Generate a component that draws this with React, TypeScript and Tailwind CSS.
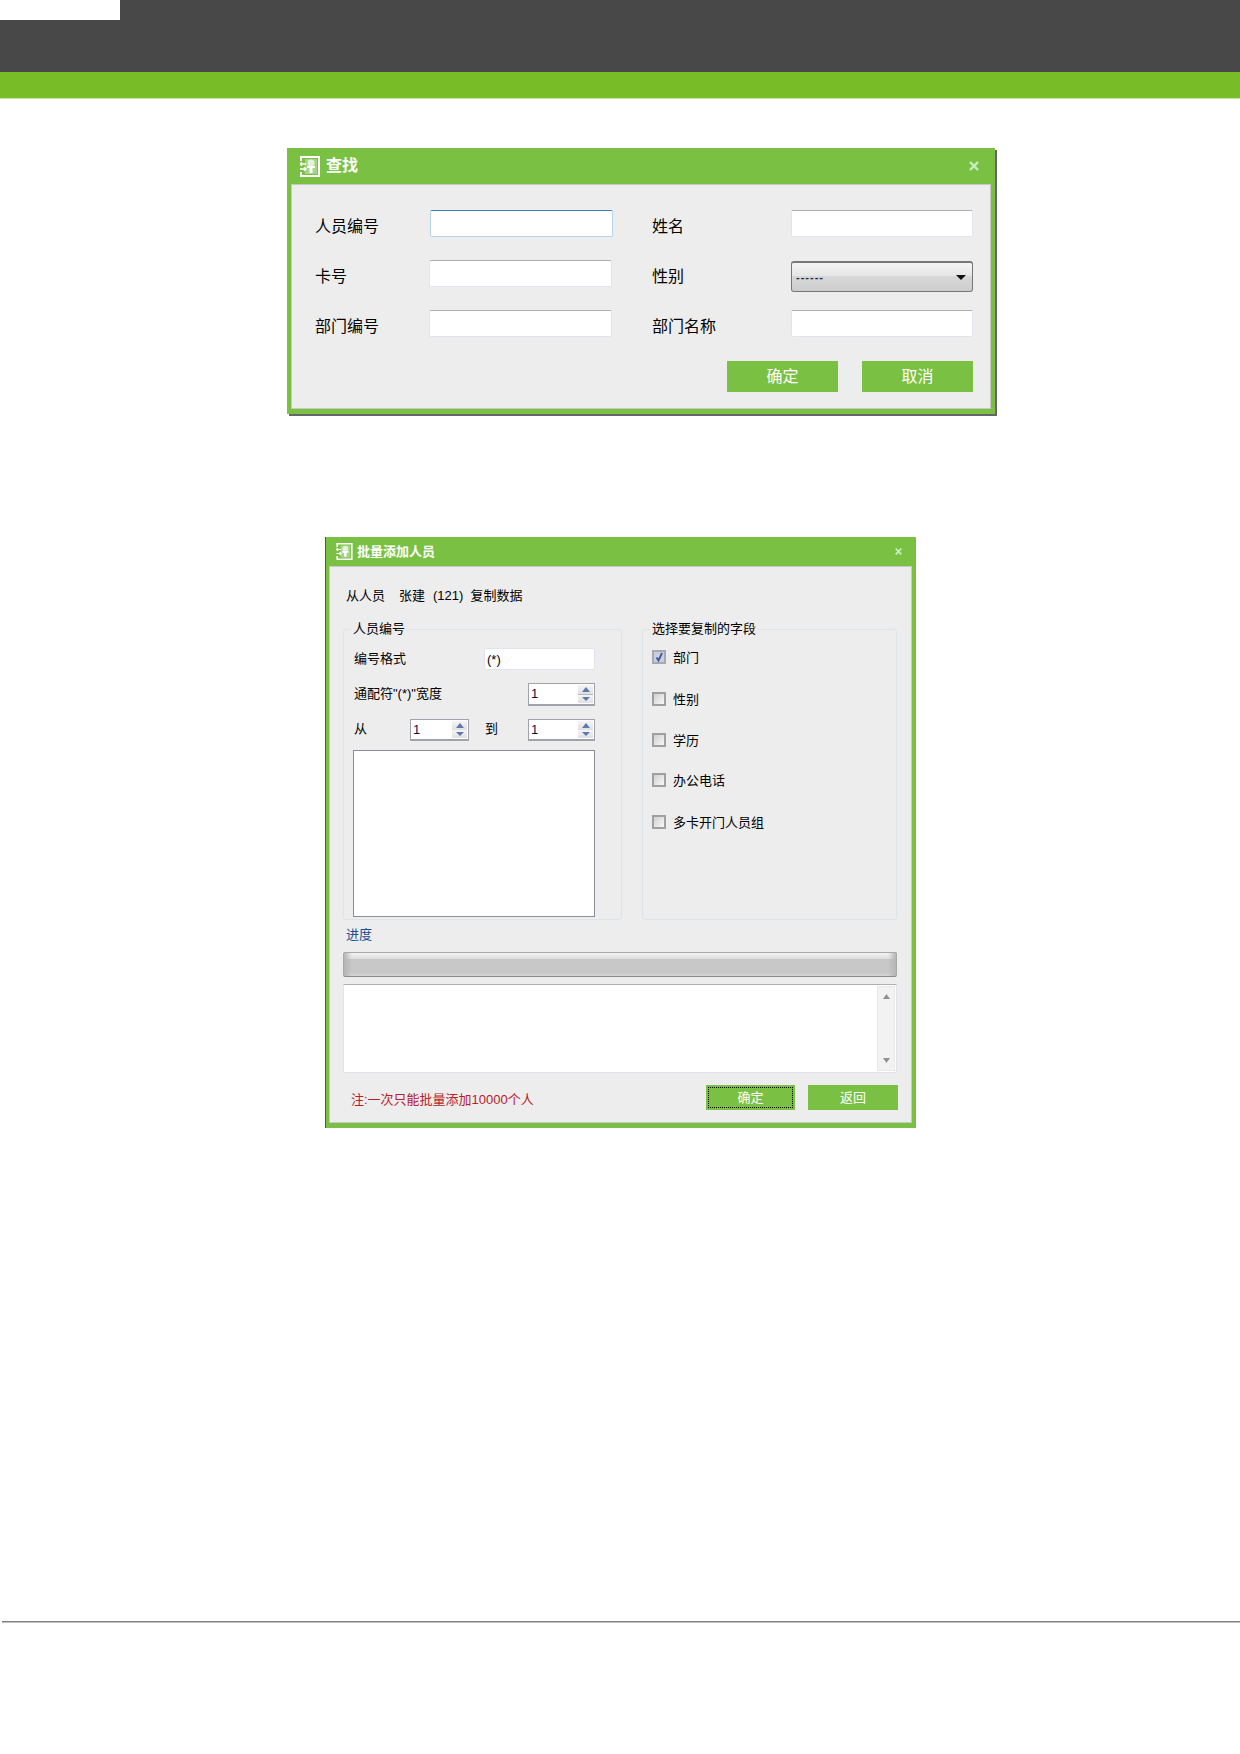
import React from "react";

function TitleIcon({ className }: { className: string }) {
  return (
    <svg viewBox="0 0 20 21" className={className}>
      <path d="M1 5V1H19V20H1V16" fill="none" stroke="#fff" strokeWidth="2" />
      <rect x="5" y="3" width="12" height="15" fill="#a5d38b" />
      <circle cx="11" cy="7" r="3.5" fill="#e4f3da" />
      <path d="M7 10H15V12H12.5V17H9.5V12H7Z" fill="#fff" />
      <path d="M0 8H6M2 6.3L0 8L2 9.7M0 13H6M4 11.3L6 13L4 14.7" fill="none" stroke="#fff" strokeWidth="1.4" />
    </svg>
  );
}

function CloseIcon({ className }: { className: string }) {
  return (
    <svg viewBox="0 0 10 10" className={className}>
      <path d="M1 1L9 9M9 1L1 9" stroke="#c9eec4" strokeWidth="2.4" fill="none" />
    </svg>
  );
}

function TextBox({ focused, className }: { focused?: boolean; className: string }) {
  return (
    <div
      className={
        focused
          ? `h-[27px] rounded-[2px] border border-[#b5d3ea] border-t-[#3b82b8] bg-white ${className}`
          : `h-[27px] rounded-[2px] border border-[#e1e4ea] border-t-[#aeaeb2] bg-white ${className}`
      }
    />
  );
}

function GreenButton({ label, className }: { label: string; className: string }) {
  return (
    <button className={`flex items-center justify-center bg-[#7ac143] text-white ${className}`}>{label}</button>
  );
}

function Spin({ className }: { className: string }) {
  return (
    <div className={`flex items-stretch justify-between border border-b-2 border-[#a0a3ae] bg-white py-px pl-[2px] pr-px text-[13px] leading-[18px] ${className}`}>
      <span className="text-[#101040]">1</span>
      <div className="flex w-[15px] flex-col justify-between bg-[#b5b7c0]">
        <div className="flex h-[9px] items-center justify-center bg-[linear-gradient(#f5f5f5,#dfe0e4)]">
          <svg viewBox="0 0 8 5" className="h-[5px] w-[8px]"><path d="M4 0L8 5H0Z" fill="#5d78b0" /></svg>
        </div>
        <div className="flex h-[8px] items-center justify-center bg-[linear-gradient(#f5f5f5,#dfe0e4)]">
          <svg viewBox="0 0 8 4" className="h-[4px] w-[8px]"><path d="M0 0H8L4 4Z" fill="#5d78b0" /></svg>
        </div>
      </div>
    </div>
  );
}

function Check({ label, checked, className }: { label: string; checked?: boolean; className: string }) {
  return (
    <div className={`flex h-[14px] items-center gap-[7px] text-[13px] text-black ${className}`}>
      <div
        className={
          checked
            ? "relative h-[14px] w-[14px] border-2 border-[#a8a8b0] bg-[#c9cfdc]"
            : "h-[14px] w-[14px] border-2 border-[#a0a0a0] bg-[linear-gradient(135deg,#cfd1d4,#f7f7f7)]"
        }
      >
        {checked && (
          <svg viewBox="0 0 10 10" className="absolute inset-0 h-[10px] w-[10px]">
            <path d="M2.5 5.5L4.5 8.5L8 1" fill="none" stroke="#3a55a5" strokeWidth="1.8" />
          </svg>
        )}
      </div>
      <span className="mt-[2px]">{label}</span>
    </div>
  );
}

function GroupBox({ title, className, children }: { title: string; className: string; children: React.ReactNode }) {
  return (
    <div className={`relative h-[291px] rounded-[3px] border border-[#dde4ea] ${className}`}>
      <span className="absolute -top-[10px] left-[7px] bg-[#ededed] px-[2px] text-[13px] leading-[18px] text-black">{title}</span>
      {children}
    </div>
  );
}

function FindRow({ a, b, focused, select }: { a: string; b: string; focused?: boolean; select?: boolean }) {
  return (
    <div className="mb-[23px] flex h-[27px] items-start text-[16px] text-black">
      <span className="w-[114px] pt-[3px] leading-[27px]">{a}</span>
      {focused ? <TextBox focused className="ml-px w-[183px]" /> : <TextBox className="w-[183px]" />}
      <span className={focused ? "ml-[39px] w-[139px] pt-[3px] leading-[27px]" : "ml-[40px] w-[139px] pt-[3px] leading-[27px]"}>{b}</span>
      {select ? (
        <div className="mt-px flex h-[31px] w-[182px] items-center justify-between rounded-[3px] border border-t-2 border-[#777] bg-[linear-gradient(#f4f4f4,#e6e6e6_45%,#d8d8d8_46%,#cdcdcd)] pl-[4px] pr-[6px]">
          <span className="text-[11px] font-bold leading-none tracking-[1px] text-[#1b2a55]">------</span>
          <svg viewBox="0 0 10 5" className="h-[5px] w-[10px]"><path d="M0 0H10L5 5Z" fill="#111" /></svg>
        </div>
      ) : (
        <TextBox className="w-[182px]" />
      )}
    </div>
  );
}

export default function App() {
  return (
    <div className="min-h-[1754px] bg-white font-['Liberation_Sans','Noto_Sans_CJK_SC',sans-serif]">
      <header>
        <div className="h-[72px] bg-[#484848]">
          <div className="h-[20px] w-[120px] bg-white" />
        </div>
        <div className="h-[27px] border-b border-[#c5e5a5] bg-[#78bc28]" />
      </header>

      <section className="ml-[287px] mt-[49px] h-[266px] w-[708px] bg-[#7ac143] px-[4px] pb-[5px] shadow-[2px_2px_0_#666]">
        <div className="-mx-[4px] flex h-[36px] items-center pl-[13px] pr-[16px]">
          <TitleIcon className="h-[21px] w-[20px]" />
          <span className="ml-[6px] text-[16px] font-semibold text-white">查找</span>
          <CloseIcon className="ml-auto h-[10px] w-[10px]" />
        </div>
        <div className="h-[225px] border border-[#c8c8c8] bg-[#ededed] pl-[23px] pr-[17px] pt-[25px]">
          <FindRow a="人员编号" b="姓名" focused />
          <FindRow a="卡号" b="性别" select />
          <FindRow a="部门编号" b="部门名称" />
          <div className="flex justify-end gap-[24px] pt-px text-[16px]">
            <GreenButton label="确定" className="h-[31px] w-[111px]" />
            <GreenButton label="取消" className="h-[31px] w-[111px]" />
          </div>
        </div>
      </section>

      <section className="ml-[325px] mt-[123px] h-[591px] w-[591px] border-l border-[#555] bg-[#7ac143] pb-[5px] pl-[3px] pr-[4px]">
        <div className="flex h-[29px] items-center pl-[7px] pr-[10px]">
          <TitleIcon className="h-[17px] w-[17px]" />
          <span className="ml-[4px] text-[13px] font-semibold text-white">批量添加人员</span>
          <CloseIcon className="ml-auto h-[7px] w-[7px]" />
        </div>
        <div className="h-[557px] border border-[#c8c8c8] bg-[#ededed] px-[13px] text-[13px] text-black">
          <div className="flex h-[62px] items-start pl-[3px] pt-[20px] leading-[18px]">
            <span>从人员</span>
            <span className="ml-[14px]">张建</span>
            <span className="ml-[8px]">(121)</span>
            <span className="ml-[7px]">复制数据</span>
          </div>
          <div className="flex gap-[20px]">
            <GroupBox title="人员编号" className="w-[279px] pl-[9px] pt-[18px]">
              <div className="flex h-[22px] w-[242px] items-center justify-between">
                <span className="pl-px">编号格式</span>
                <div className="flex h-[22px] w-[111px] items-center rounded-[2px] border border-[#e1e4ea] bg-white pl-[2px] pt-[2px]">(*)</div>
              </div>
              <div className="mt-[13px] flex h-[23px] w-[242px] items-center justify-between">
                <span className="pb-[2px] pl-px">通配符"(*)"宽度</span>
                <Spin className="h-[23px] w-[67px]" />
              </div>
              <div className="mt-[13px] flex h-[22px] w-[242px] items-center">
                <span className="w-[57px] pb-[2px] pl-px">从</span>
                <Spin className="h-[22px] w-[59px]" />
                <span className="ml-[16px] w-[43px] pb-[2px]">到</span>
                <Spin className="h-[22px] w-[67px]" />
              </div>
              <div className="mt-[9px] h-[167px] w-[242px] border border-[#8a8d98] bg-white" />
            </GroupBox>
            <GroupBox title="选择要复制的字段" className="w-[255px] pl-[9px] pt-[20px]">
              <Check label="部门" checked className="" />
              <Check label="性别" className="mt-[28px]" />
              <Check label="学历" className="mt-[27px]" />
              <Check label="办公电话" className="mt-[26px]" />
              <Check label="多卡开门人员组" className="mt-[28px]" />
            </GroupBox>
          </div>
          <div className="mt-[5px] h-[20px] pl-[3px] leading-[20px] text-[#1a4a94]">进度</div>
          <div className="mt-[7px] h-[25px] w-[554px] rounded-[2px] border border-[#a8a8a8] border-b-[#8a8a8a] bg-[linear-gradient(to_right,#b5b5b5,rgba(200,200,200,0)_8px,rgba(200,200,200,0)_calc(100%-8px),#b5b5b5),linear-gradient(#f3f3f3,#dcdcdc_26%,#c8c8c8_27%,#c8c8c8_85%,#d5d5d5)]" />
          <div className="mt-[7px] flex h-[89px] w-[554px] justify-end border border-[#e1e4ea] border-t-[#aeaeb2] bg-white py-px pr-px">
            <div className="flex w-[18px] flex-col items-center justify-between border border-[#e8e8e8] bg-[#f2f2f2] py-[7px]">
              <svg viewBox="0 0 7 5" className="h-[5px] w-[7px]"><path d="M3.5 0L7 5H0Z" fill="#909090" /></svg>
              <svg viewBox="0 0 7 5" className="h-[5px] w-[7px]"><path d="M0 0H7L3.5 5Z" fill="#909090" /></svg>
            </div>
          </div>
          <div className="mt-[12px] flex h-[25px] w-[555px] items-start">
            <span className="pl-[8px] pt-[6px] leading-[18px] text-[#b5202a]">注:一次只能批量添加10000个人</span>
            <GreenButton label="确定" className="ml-auto h-[25px] w-[89px] outline-1 -outline-offset-[3px] outline-dotted outline-black" />
            <GreenButton label="返回" className="ml-[13px] h-[25px] w-[90px]" />
          </div>
        </div>
      </section>

      <div className="ml-[2px] mt-[493px] h-[2px] border-b border-[#bdbdbd] bg-[#808080]" />
    </div>
  );
}
